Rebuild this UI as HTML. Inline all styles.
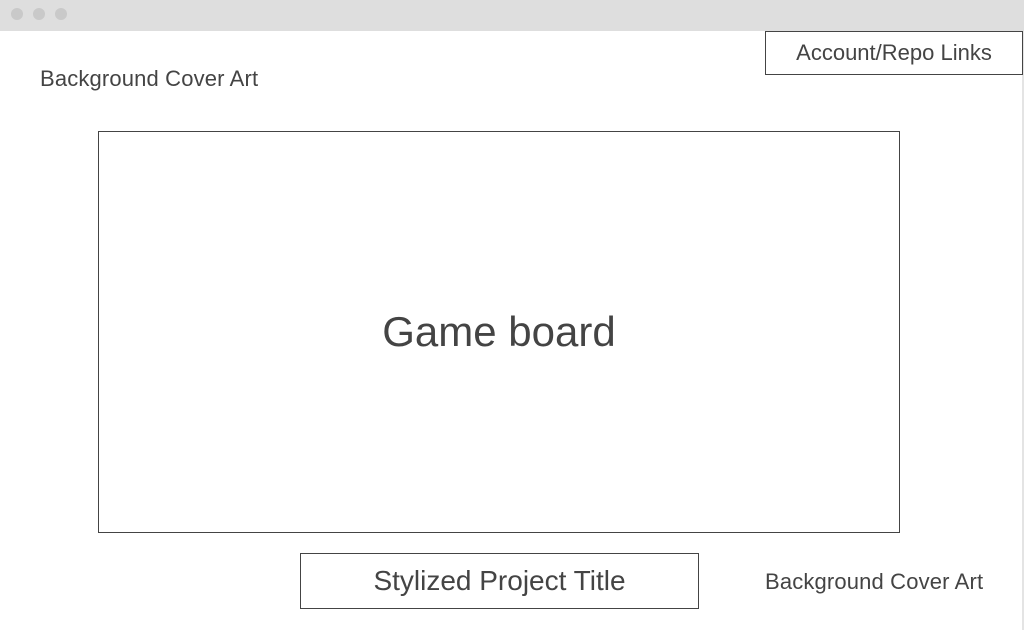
<!DOCTYPE html>
<html><head><style>
body{margin:0;width:1024px;height:630px;background:#fff;position:relative;overflow:hidden;font-family:"Liberation Sans",sans-serif;color:#444}
.bar{position:absolute;left:0;top:0;width:1024px;height:31px;background:#dedede}
.dot{position:absolute;top:8px;width:12px;height:12px;border-radius:50%;background:#c9c9c9}
.box{position:absolute;border:1px solid #444;box-sizing:border-box;display:flex;align-items:center;justify-content:center}
.t{position:absolute;font-size:22px;white-space:nowrap;letter-spacing:0.15px}
</style></head><body>
<div class="bar"></div>
<div class="dot" style="left:11px"></div>
<div class="dot" style="left:33px"></div>
<div class="dot" style="left:55px"></div>
<div style="position:absolute;left:1022px;top:31px;width:2px;height:599px;background:#e4e4e4"></div>
<div class="box" style="left:765px;top:31px;width:258px;height:44px;font-size:22px">Account/Repo Links</div>
<div class="t" style="left:40px;top:66px">Background Cover Art</div>
<div class="box" style="left:98px;top:131px;width:802px;height:402px;font-size:42px">Game board</div>
<div class="box" style="left:300px;top:553px;width:399px;height:56px;font-size:28px">Stylized Project Title</div>
<div class="t" style="left:765px;top:569px">Background Cover Art</div>
</body></html>
